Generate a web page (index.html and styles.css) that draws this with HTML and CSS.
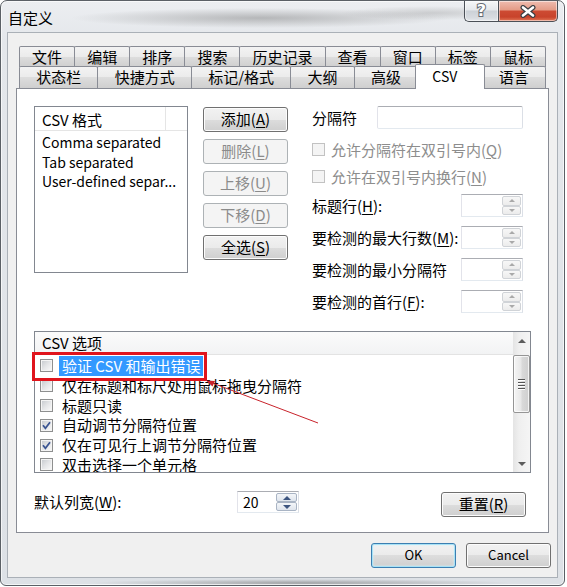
FILE: index.html
```html
<!DOCTYPE html>
<html lang="zh-CN">
<head>
<meta charset="utf-8">
<title>自定义</title>
<link rel="stylesheet" href="styles.css">
</head>
<body>
<div class="window">
  <div class="titlebar">
    <span class="title">自定义</span>
    <div class="caption">
      <div class="cap help"><span class="q">?</span></div>
      <div class="cap close">
        <svg width="18" height="13" viewBox="0 0 18 13"><path d="M4 2.5 L14 10.5 M14 2.5 L4 10.5" stroke="#3c3f44" stroke-width="5" stroke-linecap="round" fill="none"/><path d="M4 2.5 L14 10.5 M14 2.5 L4 10.5" stroke="#fff" stroke-width="2.6" stroke-linecap="round" fill="none"/></svg>
      </div>
    </div>
  </div>
  <div class="client">
    <div class="tabs">
      <div class="tabrow back">
        <div class="tab">文件</div>
        <div class="tab">编辑</div>
        <div class="tab">排序</div>
        <div class="tab">搜索</div>
        <div class="tab">历史记录</div>
        <div class="tab">查看</div>
        <div class="tab">窗口</div>
        <div class="tab">标签</div>
        <div class="tab">鼠标</div>
      </div>
      <div class="tabrow front">
        <div class="tab">状态栏</div>
        <div class="tab">快捷方式</div>
        <div class="tab">标记/格式</div>
        <div class="tab">大纲</div>
        <div class="tab">高级</div>
        <div class="tab sel">CSV</div>
        <div class="tab">语言</div>
      </div>
    </div>
    <div class="panel">
      <div class="top">
        <div class="listbox">
          <div class="lv-head"><span class="lv-col">CSV 格式</span></div>
          <div class="lv-body">
            <div class="lv-item">Comma separated</div>
            <div class="lv-item">Tab separated</div>
            <div class="lv-item">User-defined separ...</div>
          </div>
        </div>
        <div class="btncol">
          <div class="btn">添加(<u>A</u>)</div>
          <div class="btn dis">删除(<u>L</u>)</div>
          <div class="btn dis">上移(<u>U</u>)</div>
          <div class="btn dis">下移(<u>D</u>)</div>
          <div class="btn">全选(<u>S</u>)</div>
        </div>
        <div class="form">
          <div class="frow sep"><span>分隔符</span><span class="textbox"></span></div>
          <div class="frow chk c1"><span class="cb dis"></span><span>允许分隔符在双引号内(<u>Q</u>)</span></div>
          <div class="frow chk c2"><span class="cb dis"></span><span>允许在双引号内换行(<u>N</u>)</span></div>
          <div class="frow sp s1"><span>标题行(<u>H</u>):</span><span class="spin dis"><span class="val"></span><span class="sbtns"><span class="sbtn"><span class="tri up"></span></span><span class="sbtn"><span class="tri down"></span></span></span></span></div>
          <div class="frow sp"><span>要检测的最大行数(<u>M</u>):</span><span class="spin dis"><span class="val"></span><span class="sbtns"><span class="sbtn"><span class="tri up"></span></span><span class="sbtn"><span class="tri down"></span></span></span></span></div>
          <div class="frow sp"><span>要检测的最小分隔符</span><span class="spin dis"><span class="val"></span><span class="sbtns"><span class="sbtn"><span class="tri up"></span></span><span class="sbtn"><span class="tri down"></span></span></span></span></div>
          <div class="frow sp"><span>要检测的首行(<u>F</u>):</span><span class="spin dis"><span class="val"></span><span class="sbtns"><span class="sbtn"><span class="tri up"></span></span><span class="sbtn"><span class="tri down"></span></span></span></span></div>
        </div>
      </div>
      <div class="options">
        <div class="opt-main">
          <div class="opt-head">CSV 选项</div>
          <div class="opt-body">
            <div class="opt"><span class="cb"></span><span class="otext sel">验证 CSV 和输出错误</span></div>
            <div class="opt"><span class="cb"></span><span class="otext">仅在标题和标尺处用鼠标拖曳分隔符</span></div>
            <div class="opt"><span class="cb"></span><span class="otext">标题只读</span></div>
            <div class="opt"><span class="cb on"><svg width="11" height="11" viewBox="0 0 11 11"><path d="M2 5.3 L4.4 8.2 L9 2.3" stroke="#3b5592" stroke-width="1.8" fill="none"/></svg></span><span class="otext">自动调节分隔符位置</span></div>
            <div class="opt"><span class="cb on"><svg width="11" height="11" viewBox="0 0 11 11"><path d="M2 5.3 L4.4 8.2 L9 2.3" stroke="#3b5592" stroke-width="1.8" fill="none"/></svg></span><span class="otext">仅在可见行上调节分隔符位置</span></div>
            <div class="opt last"><span class="cb"></span><span class="otext">双击选择一个单元格</span></div>
          </div>
        </div>
        <div class="vscroll">
          <div class="sarrow"><span class="tri up dark"></span></div>
          <div class="thumb"><span class="grip"></span><span class="grip"></span><span class="grip"></span><span class="grip"></span></div>
          <div class="spacer"></div>
          <div class="sarrow"><span class="tri down dark"></span></div>
        </div>
      </div>
      <div class="bottomrow">
        <span class="lbl">默认列宽(<u>W</u>):</span>
        <span class="spin en"><span class="val">20</span><span class="sbtns"><span class="sbtn"><span class="tri up"></span></span><span class="sbtn"><span class="tri down"></span></span></span></span>
        <div class="btn reset">重置(<u>R</u>)</div>
      </div>
    </div>
    <div class="dlgbtns">
      <div class="btn def">OK</div>
      <div class="btn">Cancel</div>
    </div>
  </div>
</div>
<svg class="annot" width="567" height="587" viewBox="0 0 567 587">
  <rect x="33.5" y="353.5" width="172" height="26" fill="none" stroke="#e0141c" stroke-width="3"/>
  <line x1="211" y1="382.5" x2="318" y2="423" stroke="#c8232b" stroke-width="1"/>
  <polygon points="206,380.5 215,381 212.5,386.5" fill="#c8232b"/>
</svg>
</body>
</html>
```

FILE: styles.css
```css
* { box-sizing: border-box; }
html, body { margin: 0; padding: 0; }
body {
  width: 567px;
  height: 587px;
  position: relative;
  overflow: hidden;
  background: #fff;
  font-family: "Noto Sans CJK SC", "Noto Sans", sans-serif;
  font-size: 15px;
  line-height: 20px;
  color: #000;
}
u { text-decoration: underline; text-underline-offset: 2px; text-decoration-thickness: 1px; }

/* ---------- window frame ---------- */
.window {
  width: 565px;
  height: 586px;
  border: 1px solid #5b6066;
  border-radius: 7px 7px 6px 6px;
  padding: 0 6px 7px;
  display: flex;
  flex-direction: column;
  background:
    radial-gradient(ellipse 190px 10px at 260px 17px, rgba(110,110,110,.42), rgba(110,110,110,0)),
    radial-gradient(ellipse 90px 7px at 430px 12px, rgba(130,130,130,.3), rgba(130,130,130,0)),
    radial-gradient(ellipse 210px 4px at 300px 582px, rgba(90,90,90,.45), rgba(90,90,90,0)),
    linear-gradient(#eceef1, #e4e7eb 40px, #dde1e6);
  box-shadow: inset 0 0 0 1px rgba(255,255,255,.65);
}
.titlebar {
  height: 31px;
  flex: none;
  display: flex;
  align-items: flex-start;
}
.title {
  margin: 8px 0 0 1px;
  font-size: 15px;
  line-height: 18px;
}
.caption { margin-left: auto; display: flex; }
.cap {
  height: 21px;
  border: 1px solid #4b5057;
  border-top: 0;
  display: flex;
  align-items: center;
  justify-content: center;
  box-shadow: inset 0 0 0 1px rgba(255,255,255,.5);
}
.help {
  width: 34px;
  border-right: 0;
  border-radius: 0 0 0 5px;
  background: linear-gradient(#f6f7f8, #e5e8eb 45%, #ccd1d7 50%, #d8dce1 85%, #e6e9ed);
}
.close {
  width: 60px;
  border-radius: 0 0 5px 0;
  background: linear-gradient(#efbcb0, #e49b86 45%, #cd4b33 50%, #c8432b 80%, #e27858);
}
.q {
  font-family: "DejaVu Sans", sans-serif;
  font-weight: bold;
  font-size: 16px;
  line-height: 16px;
  color: #fff;
  -webkit-text-stroke: 2px #666c74;
  paint-order: stroke fill;
}

/* ---------- client area ---------- */
.client {
  flex: 1;
  border: 1px solid #aab0b7;
  background: #f0f0f0;
  padding: 13px 8px 9px;
  display: flex;
  flex-direction: column;
}

/* tabs */
.tabs { flex: none; padding: 0 3px 0 3px; }
.tabrow { display: flex; align-items: flex-start; position: relative; }
.tabrow.back { height: 21px; z-index: 0; }
.tabrow.front { height: 22px; margin-top: -1px; z-index: 2; }
.tab {
  flex: 1 1 auto;
  height: 21px;
  margin-left: -1px;
  border: 1px solid #898c95;
  border-bottom: 0;
  border-radius: 2px 2px 0 0;
  background: linear-gradient(#f3f3f3, #ebebeb 50%, #dddddd 50%, #cfcfcf);
  text-align: center;
  font-size: 15px;
  line-height: 19px;
  white-space: nowrap;
  position: relative;
}
.tab:first-child { margin-left: 0; }
.front .tab { height: 22px; line-height: 20px; }
.front .tab.sel {
  height: 25px;
  margin: -2px -2px -1px -3px;
  background: #fff;
  z-index: 3;
  font-size: 14px;
  line-height: 23px;
  padding-right: 10px;
}

/* panel */
.panel {
  flex: none;
  height: 445px;
  border: 1px solid #898c95;
  background: #fff;
  padding: 17px 17px 0;
  position: relative;
  z-index: 1;
}
.top { display: flex; align-items: flex-start; height: 207px; }

.listbox {
  flex: none;
  width: 154px;
  height: 167px;
  border: 1px solid #828790;
  background: #fff;
}
.lv-head {
  height: 24px;
  border-bottom: 1px solid #e5e5e5;
  display: flex;
}
.lv-col {
  width: 131px;
  border-right: 1px solid #e5e5e5;
  padding: 2px 0 0 7px;
  line-height: 21px;
}
.lv-body { padding-top: 2px; font-size: 14px; }
.lv-item { height: 19.5px; line-height: 19.5px; padding-left: 7px; white-space: nowrap; }

/* buttons */
.btn {
  width: 85px;
  height: 25px;
  border: 1px solid #707070;
  border-radius: 3px;
  background: linear-gradient(#f2f2f2, #ebebeb 50%, #dddddd 50%, #cfcfcf);
  box-shadow: inset 0 0 0 1px #fcfcfc;
  text-align: center;
  font-size: 15px;
  line-height: 22px;
  white-space: nowrap;
}
.btn.dis {
  border-color: #adb2b5;
  background: #f4f4f4;
  box-shadow: none;
  color: #8b8b8b;
}
.btncol {
  flex: none;
  margin: 1px 0 0 15px;
  display: flex;
  flex-direction: column;
  gap: 7px;
}

/* right form */
.form {
  flex: none;
  width: 212px;
  margin-left: 23px;
  padding-left: 1px;
  display: flex;
  flex-direction: column;
}
.frow { display: flex; align-items: center; white-space: nowrap; }
.frow.sep { height: 23px; }
.textbox {
  margin-left: auto;
  width: 146px;
  height: 23px;
  border: 1px solid;
  border-color: #abadb3 #dbdfe6 #e3e9ef #e2e3ea;
  border-radius: 2px;
  background: #fff;
}
.frow.chk { height: 21px; color: #8d8d8d; }
.frow.chk.c1 { margin-top: 10px; }
.frow.chk.c2 { margin-top: 6px; }
.frow.chk .cb { margin-right: 6px; }
.frow.sp { height: 23px; margin-top: 9px; justify-content: space-between; }
.frow.sp.s1 { margin-top: 7px; }

/* checkboxes */
.cb {
  flex: none;
  width: 13px;
  height: 13px;
  border: 1px solid #8e8f8f;
  background: linear-gradient(135deg, #c3c7cc 0%, #e4e5e7 50%, #fbfbfb 100%);
  box-shadow: inset 0 0 0 1px #f4f4f4;
  display: flex;
  align-items: center;
  justify-content: center;
}
.cb.dis {
  border-color: #c2c2c2;
  background: #f4f4f4;
  box-shadow: none;
}

/* spin boxes */
.spin {
  flex: none;
  width: 62px;
  height: 23px;
  border: 1px solid;
  border-color: #abadb3 #dbdfe6 #e3e9ef #e2e3ea;
  background: #fff;
  padding: 1px;
  display: flex;
}
.spin .val { flex: 1; padding-left: 4px; font-size: 14px; line-height: 19px; }
.sbtns { width: 19px; display: flex; flex-direction: column; }
.sbtn {
  flex: 1;
  border: 1px solid #d0d3d7;
  border-radius: 2px;
  background: linear-gradient(#f7f7f7, #ececec);
  display: flex;
  align-items: center;
  justify-content: center;
}
.tri { width: 0; height: 0; border-left: 3px solid transparent; border-right: 3px solid transparent; }
.tri.up { border-bottom: 3px solid #a9a9a9; }
.tri.down { border-top: 3px solid #a9a9a9; }
.spin.en { height: 22px; border-color: #abadb3 #dbdfe6 #e3e9ef #e2e3ea; }
.spin.en .sbtns { width: 21px; }
.spin.en .sbtn {
  border-color: #a9b4c4;
  background: linear-gradient(#f4f6f9, #dfe5ed);
}
.spin.en .tri.up { border-bottom-color: #3d5580; border-width: 0 4px 4px; }
.spin.en .tri.down { border-top-color: #3d5580; border-width: 4px 4px 0; }

/* options list */
.options {
  margin-top: 18px;
  height: 142px;
  border: 1px solid #828790;
  background: #fff;
  display: flex;
}
.opt-main { flex: 1; display: flex; flex-direction: column; overflow: hidden; }
.opt-head {
  flex: none;
  height: 23px;
  border-bottom: 1px solid #e3e3e3;
  background: linear-gradient(#fbfbfb, #f2f3f4);
  padding-left: 7px;
  line-height: 22px;
}
.opt-body { padding-top: 1px; }
.opt {
  height: 19.8px;
  display: flex;
  align-items: center;
  padding-left: 5px;
  white-space: nowrap;
}
.opt .cb { margin-right: 6px; }
.otext { padding: 0 3px; line-height: 20px; }
.otext.sel { background: #3399ff; color: #fff; }

.vscroll {
  flex: none;
  width: 17px;
  display: flex;
  flex-direction: column;
  background: linear-gradient(to right, #e4e4e4, #efefef 35%, #f5f5f5);
}
.sarrow { height: 17px; flex: none; display: flex; align-items: center; justify-content: center; }
.tri.dark { border-left-width: 4px; border-right-width: 4px; }
.tri.up.dark { border-bottom: 4px solid #5c5c5c; }
.tri.down.dark { border-top: 4px solid #5c5c5c; }
.thumb {
  flex: none;
  margin-top: 6px;
  height: 58px;
  border: 1px solid #959595;
  border-radius: 2px;
  background: linear-gradient(to right, #f5f5f5, #e8e8e8 45%, #d9d9d9 55%, #cfcfcf);
  box-shadow: inset 0 0 0 1px rgba(255,255,255,.75);
  display: flex;
  flex-direction: column;
  align-items: center;
  justify-content: center;
  gap: 2px;
}
.grip { width: 7px; height: 1px; background: #555; box-shadow: 0 1px 0 #fff; }
.spacer { flex: 1; }

/* bottom row */
.bottomrow {
  margin-top: 18px;
  height: 26px;
  display: flex;
  align-items: flex-start;
}
.bottomrow .lbl { width: 203px; line-height: 22px; }
.reset { margin: 1px 5px 0 auto; }

/* dialog buttons */
.dlgbtns {
  flex: none;
  margin: 10px -2px 0 0;
  display: flex;
  justify-content: flex-end;
  gap: 10px;
}
.dlgbtns .btn { font-family: "Noto Sans CJK SC", sans-serif; font-size: 13px; }
.btn.def {
  border-color: #3c7fb1;
  box-shadow: inset 0 0 0 1px #a8e2f6, inset 0 0 2px 1px #d6f1fb;
}

/* annotation overlay */
.annot { position: absolute; left: 0; top: 0; z-index: 10; pointer-events: none; }
```
